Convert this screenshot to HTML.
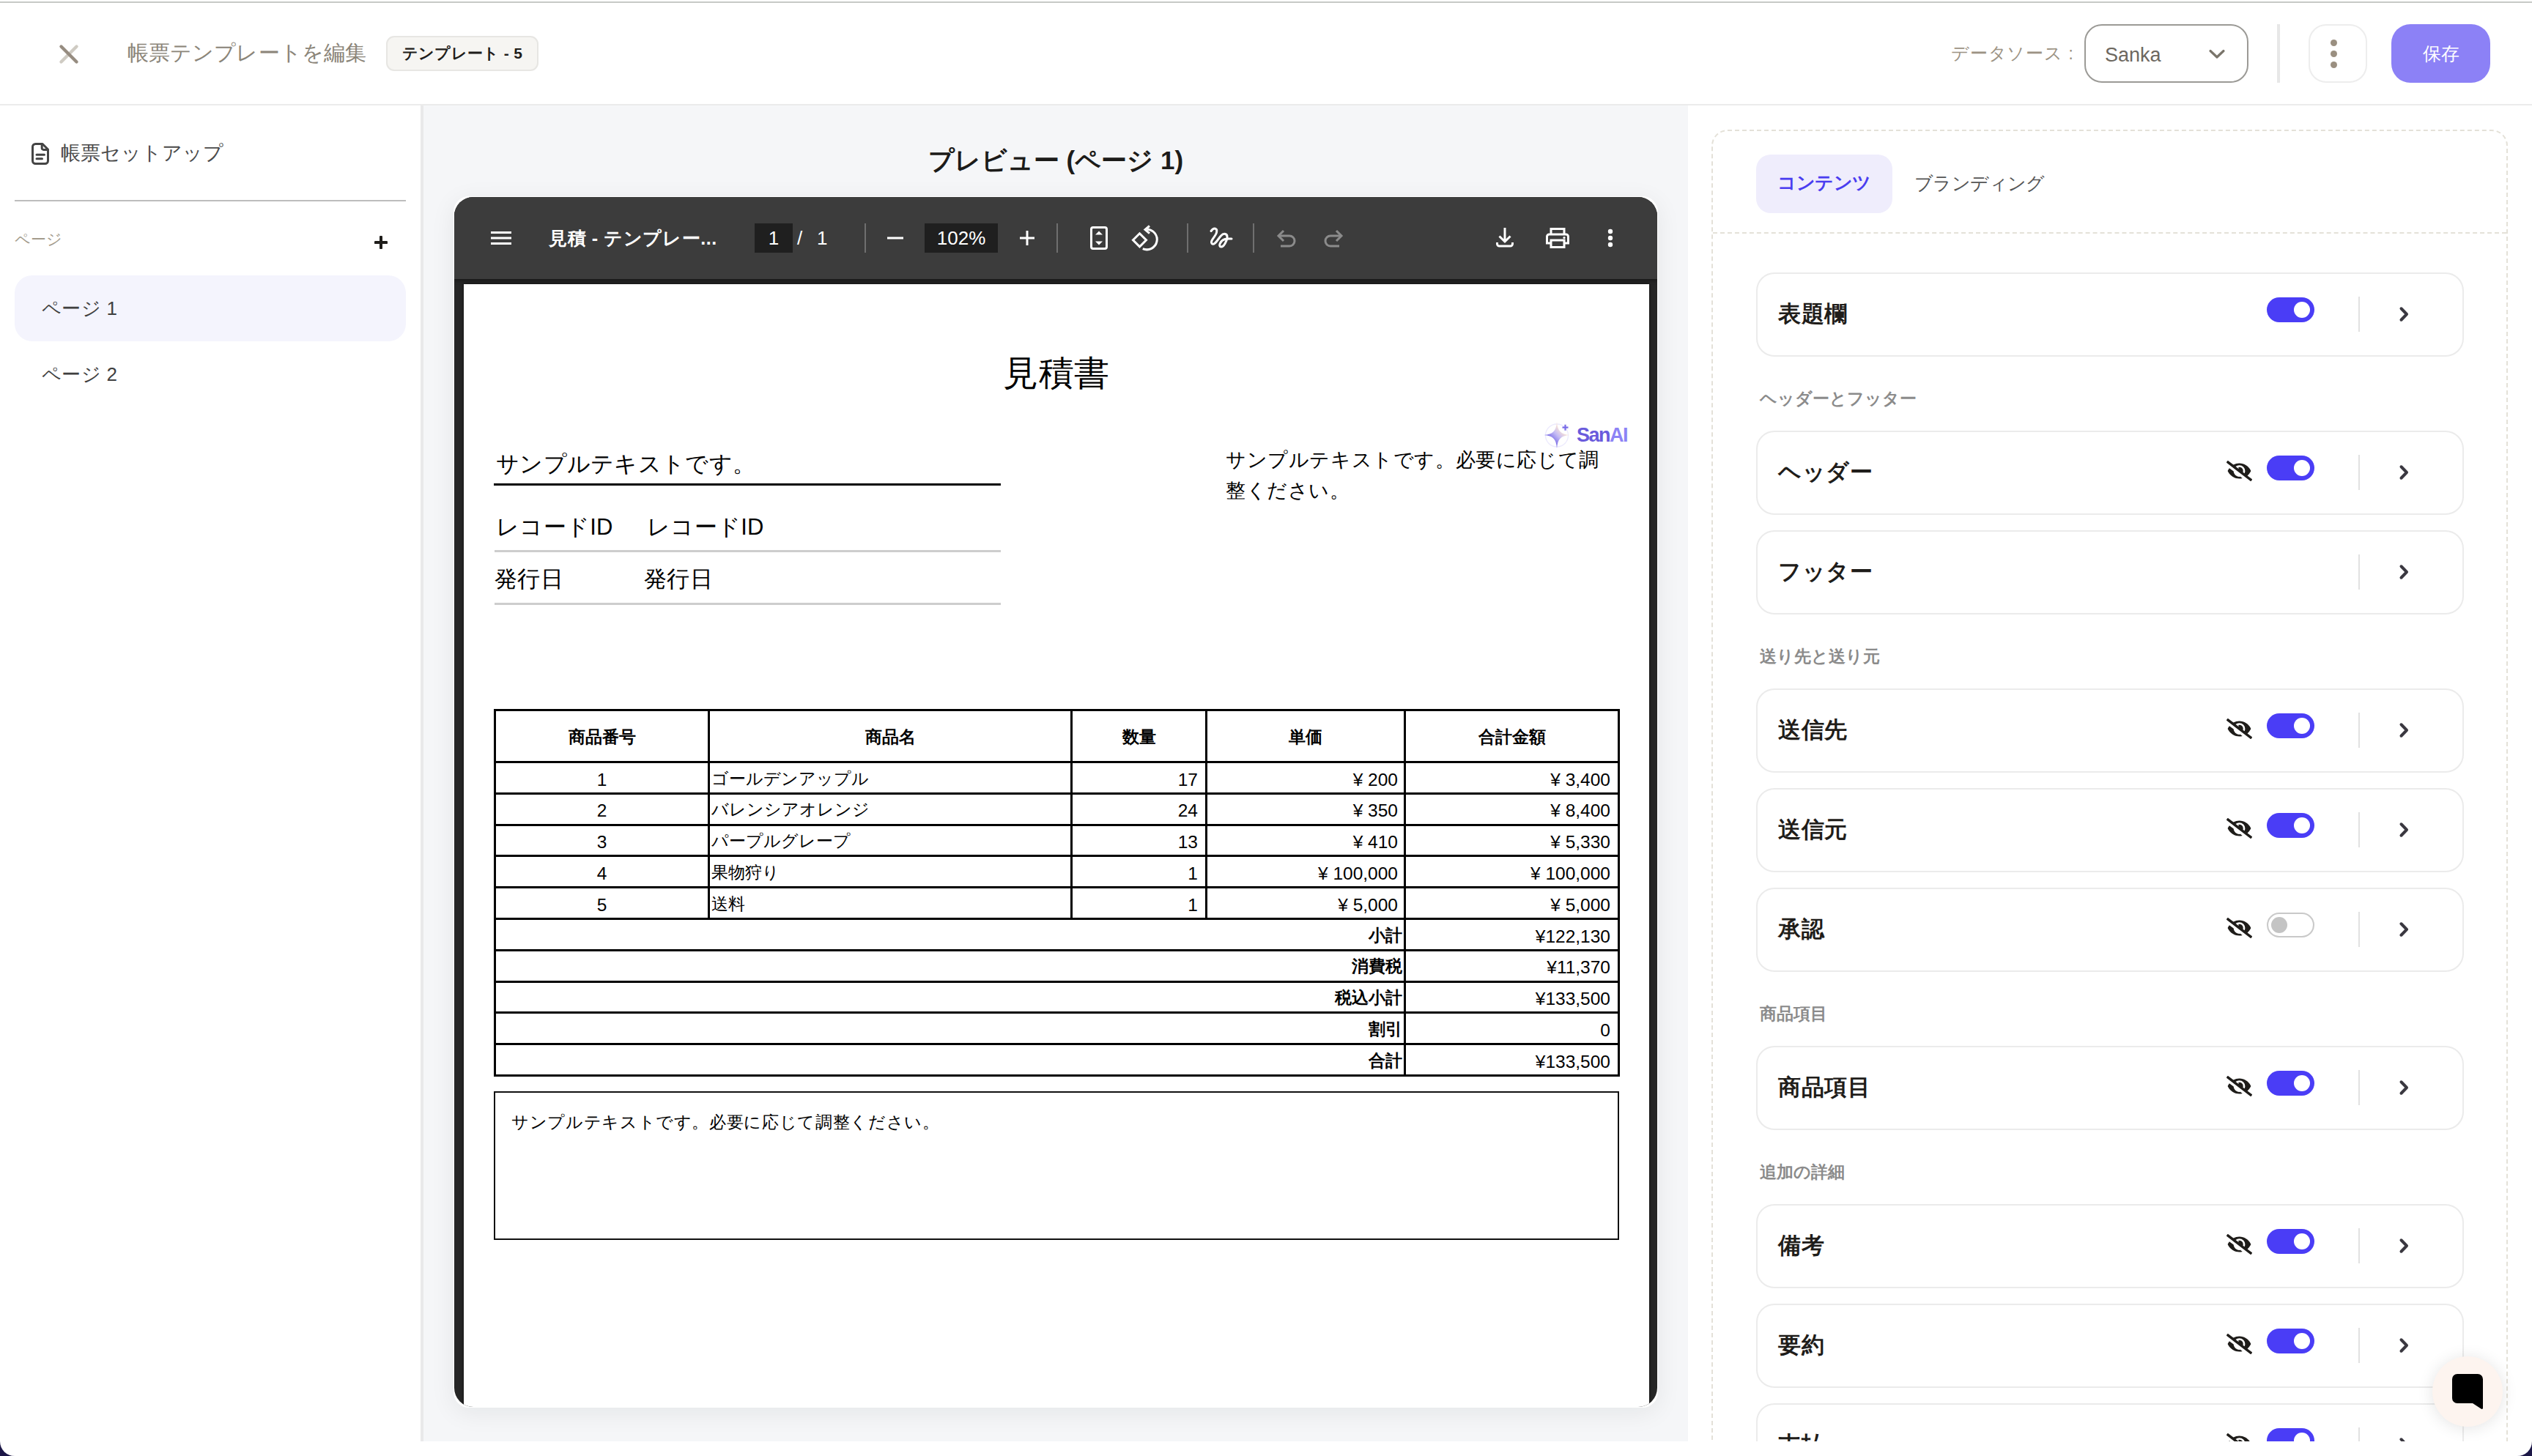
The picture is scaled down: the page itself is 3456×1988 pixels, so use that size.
<!DOCTYPE html>
<html lang="ja">
<head>
<meta charset="utf-8">
<title>帳票テンプレートを編集</title>
<style>
*{box-sizing:border-box;margin:0;padding:0}
html,body{width:3456px;height:1988px;overflow:hidden;background:#1c1747}
body{font-family:"Liberation Sans",sans-serif;color:#1f1d1a;position:relative}
.abs{position:absolute}
#win{position:absolute;left:0;top:0;width:3456px;height:1988px;background:#fff;border-radius:0 0 20px 20px;overflow:hidden}
/* top bar */
#topline{left:0;top:2px;width:3456px;height:2px;background:#c7c9c6}
#topbar{left:0;top:4px;width:3456px;height:140px;background:#fff;border-bottom:2px solid #ebebeb}
#title{left:174px;top:52px;font-size:29px;letter-spacing:.1px;line-height:40px;color:#8b8579;white-space:nowrap}
#badge{left:527px;top:49px;width:208px;height:48px;border:2px solid #e7e6e3;border-radius:11px;background:#f6f5f2;font-size:21px;letter-spacing:.3px;font-weight:bold;line-height:44px;text-align:center;color:#1f1d1a;white-space:nowrap}
#dslabel{left:2663px;top:55px;font-size:24px;letter-spacing:.8px;line-height:36px;color:#9c9384;white-space:nowrap}
#select{left:2845px;top:33px;width:224px;height:80px;border:2px solid #9b9a96;border-radius:24px;background:#fff}
#select span{position:absolute;left:26px;top:19.5px;font-size:27px;line-height:40px;color:#6d685f}
#hdiv{left:3108px;top:33px;width:4px;height:80px;background:#e7e7e7}
#kebab{left:3151px;top:33px;width:80px;height:80px;border:2px solid #ededed;border-radius:24px;background:#fff}
#kebab i{position:absolute;left:28px;width:9px;height:9px;border-radius:50%;background:#9a8f80}
#save{left:3264px;top:33px;width:135px;height:80px;border-radius:26px;background:#8c81f6;color:#fff;font-size:25px;line-height:80px;text-align:center}
/* sidebar */
#side{left:0;top:144px;width:574px;height:1824px;background:#fff}
#sideborder{left:574px;top:144px;width:4px;height:1824px;background:#e9e9ea}
#setup{left:83px;top:190px;font-size:27px;line-height:38px;color:#4b4b4b;white-space:nowrap}
#sdiv{left:20px;top:273px;width:534px;height:2px;background:#bdbdbd}
#pglabel{left:20px;top:312px;font-size:21px;line-height:30px;color:#a39b8c}
#pg1{left:20px;top:376px;width:534px;height:90px;border-radius:24px;background:#f4f4fd}
.pgt{font-size:26px;letter-spacing:.3px;line-height:36px;color:#3f3f3f;white-space:nowrap}
/* center */
#center{left:578px;top:144px;width:1726px;height:1824px;background:#f5f6f8}
#ptitle{left:620px;top:192px;width:1642px;text-align:center;font-size:35px;font-weight:bold;line-height:54px;color:#1c1b19;white-space:nowrap}
#vunder{left:619px;top:268px;width:1644px;height:1654px;border-radius:21px;background:#fff;box-shadow:0 7px 34px rgba(20,22,30,.07)}
#viewer{left:620px;top:269px;width:1642px;height:1652px;border-radius:26px;background:#262626;overflow:hidden}
#tb{left:0;top:0;width:1642px;height:112px;background:#3c3c3c;box-shadow:0 2px 5px rgba(0,0,0,.4)}
#tb .t{position:absolute;color:#fff;white-space:nowrap}
#tb .sep{position:absolute;top:36px;width:2px;height:40px;background:#6f6f6f}
#tb .box{position:absolute;top:36px;height:40px;background:#1f1f1f;color:#fff;text-align:center;font-size:26px;line-height:40px}
#page{left:13px;top:119px;width:1618px;height:1600px;background:#fff;color:#000;box-shadow:0 0 4px rgba(0,0,0,.7)}
#page .t{position:absolute;white-space:nowrap}
/* right */
#right{left:2304px;top:144px;width:1152px;height:1824px;background:#fff;overflow:hidden}
#dash{left:32px;top:33px;width:1087px;height:1900px;border:2px dashed #e4e1d8;border-radius:22px}
#dashh{left:34px;top:173px;width:1083px;height:0;border-top:2px dashed #e4e1d8}
#tab1{left:93px;top:67px;width:186px;height:80px;border-radius:20px;background:#efedfc;color:#4a3df0;font-weight:bold;font-size:25px;letter-spacing:-.4px;line-height:76px;text-align:center}
#tab2{left:309px;top:67px;font-size:25px;letter-spacing:-.6px;line-height:78px;color:#555;white-space:nowrap}
.card{position:absolute;left:93px;width:966px;height:115px;border:2px solid #ebebeb;border-radius:25px;background:#fff}
.card .nm{position:absolute;left:28px;top:32px;font-size:31px;letter-spacing:.6px;font-weight:bold;line-height:46px;color:#1f1d1a;white-space:nowrap}
.card .vd{position:absolute;left:820px;top:31px;width:2px;height:48px;background:#e1e1e1}
.card .chev{position:absolute;left:872px;top:41px}
.card .tg{position:absolute;left:695px;top:32px;width:65px;height:34px;border-radius:17px;background:#4a3df6}
.card .tg i{position:absolute;left:37px;top:6px;width:22px;height:22px;border-radius:50%;background:#fff}
.card .tg.off{background:#fff;border:2px solid #c9c9c9}
.card .tg.off i{left:4px;top:4px;background:#c4c4c4}
.card .eye{position:absolute;left:639.500px;top:39px}
.sec{position:absolute;left:98px;font-size:23px;font-weight:bold;line-height:32px;color:#8b8b8b;white-space:nowrap}
#chat{left:3320px;top:1852px;width:96px;height:96px;border-radius:50%;background:#fdf4ef;box-shadow:0 2px 22px rgba(0,0,0,.11)}
</style>
</head>
<body>
<div id="win">
<!-- TOP BAR -->
<div class="abs" id="topbar"></div>
<div class="abs" id="topline"></div>
<svg class="abs" style="left:77px;top:57px" width="34" height="34" viewBox="0 0 34 34"><path d="M27.500 6.500L6.500 27.500" stroke="#cfcbc3" stroke-width="4.400" stroke-linecap="round"/><path d="M6.500 6.500L27.500 27.500" stroke="#968c80" stroke-width="4.400" stroke-linecap="round"/></svg>
<div class="abs" id="title">帳票テンプレートを編集</div>
<div class="abs" id="badge">テンプレート - 5</div>
<div class="abs" id="dslabel">データソース :</div>
<div class="abs" id="select"><span>Sanka</span><svg class="abs" style="left:165px;top:30px" width="28" height="18" viewBox="0 0 28 18"><path d="M5 4.5L14 13L23 4.5" fill="none" stroke="#7a756b" stroke-width="3.2" stroke-linecap="round" stroke-linejoin="round"/></svg></div>
<div class="abs" id="hdiv"></div>
<div class="abs" id="kebab"><i style="top:19px"></i><i style="top:34px"></i><i style="top:49px"></i></div>
<div class="abs" id="save">保存</div>

<!-- SIDEBAR -->
<div class="abs" id="side"></div>
<div class="abs" id="sideborder"></div>
<svg class="abs" style="left:41px;top:193px" width="28" height="34" viewBox="0 0 28 34"><path d="M7.500 3.500H17L24.500 11V26.500a4 4 0 0 1-4 4H7.500A4 4 0 0 1 3.500 26.500V7.500A4 4 0 0 1 7.500 3.500Z" fill="none" stroke="#444" stroke-width="3" stroke-linejoin="round"/><path d="M16.200 4V9.200A2.200 2.200 0 0 0 18.400 11.400H24" fill="none" stroke="#444" stroke-width="3"/><path d="M9 18.200H19.500M9 23.700H16.500" stroke="#444" stroke-width="3" stroke-linecap="round"/></svg>
<div class="abs" id="setup">帳票セットアップ</div>
<div class="abs" id="sdiv"></div>
<div class="abs" id="pglabel">ページ</div>
<svg class="abs" style="left:511px;top:322px" width="18" height="18" viewBox="0 0 18 18"><path d="M9 1.500V16.500M1.500 9H16.500" stroke="#1f1d1a" stroke-width="4" stroke-linecap="round"/></svg>
<div class="abs" id="pg1"></div>
<div class="abs pgt" style="left:57px;top:403px">ページ 1</div>
<div class="abs pgt" style="left:57px;top:493px">ページ 2</div>

<!-- CENTER -->
<div class="abs" id="center"></div>
<div class="abs" id="ptitle">プレビュー (ページ 1)</div>
<div class="abs" id="vunder"></div>
<div class="abs" id="viewer">
<div class="abs" id="page"><!--PAGE-->
<div class="t" style="left:736px;top:92px;font-size:48px;line-height:60px;letter-spacing:.5px">見積書</div>
<svg class="abs" style="left:1472px;top:186px" width="40" height="40" viewBox="0 0 40 40"><defs><linearGradient id="lg" gradientUnits="userSpaceOnUse" x1="9" y1="31" x2="31" y2="9"><stop offset="0" stop-color="#5646de"/><stop offset=".5" stop-color="#c3baf5"/><stop offset=".8" stop-color="#f6e1da"/><stop offset="1" stop-color="#fbe6d8"/></linearGradient></defs><circle cx="20" cy="20.500" r="15.500" fill="none" stroke="#eceafd" stroke-width="1.300"/><path d="M20 2C21 14.500 25.500 19 37.500 20C25.500 21 21 25.500 20 38C19 25.500 14.500 21 2.500 20C14.500 19 19 14.500 20 2Z" fill="url(#lg)"/><path d="M31.500 5.700V13.700M27.500 9.700H35.500" stroke="#7a6de8" stroke-width="2.200"/></svg>
<div class="t" style="left:1519px;top:188px;font-size:27px;line-height:36px;font-weight:bold;letter-spacing:-1.500px"><span style="color:#6a5bdc">San</span><span style="color:#8d83f5">AI</span></div>
<div class="t" style="left:44px;top:225px;font-size:31px;line-height:42px;letter-spacing:.3px">サンプルテキストです。</div>
<div class="abs" style="left:41px;top:271.5px;width:692px;height:3px;background:#000"></div>
<div class="t" style="left:44px;top:311px;font-size:31px;line-height:42px;letter-spacing:.3px">レコードID</div>
<div class="t" style="left:250px;top:311px;font-size:31px;line-height:42px;letter-spacing:.3px">レコードID</div>
<div class="abs" style="left:42px;top:363px;width:691px;height:3px;background:#cdcdcd"></div>
<div class="t" style="left:42px;top:382px;font-size:31px;line-height:42px;letter-spacing:.3px">発行日</div>
<div class="t" style="left:246px;top:382px;font-size:31px;line-height:42px;letter-spacing:.3px">発行日</div>
<div class="abs" style="left:42px;top:435px;width:691px;height:3px;background:#cdcdcd"></div>
<div class="t" style="left:1040px;top:218.5px;font-size:27px;line-height:42px;letter-spacing:.6px">サンプルテキストです。必要に応じて調</div>
<div class="t" style="left:1040px;top:261px;font-size:27px;line-height:42px;letter-spacing:.6px">整ください。</div>
<div class="abs" style="left:41px;top:580px;width:1537px;height:3px;background:#000"></div>
<div class="abs" style="left:41px;top:651px;width:1537px;height:3px;background:#000"></div>
<div class="abs" style="left:41px;top:693.8px;width:1537px;height:3px;background:#000"></div>
<div class="abs" style="left:41px;top:736.6px;width:1537px;height:3px;background:#000"></div>
<div class="abs" style="left:41px;top:779.4px;width:1537px;height:3px;background:#000"></div>
<div class="abs" style="left:41px;top:822.2px;width:1537px;height:3px;background:#000"></div>
<div class="abs" style="left:41px;top:865.0px;width:1537px;height:3px;background:#000"></div>
<div class="abs" style="left:41px;top:907.8px;width:1537px;height:3px;background:#000"></div>
<div class="abs" style="left:41px;top:950.6px;width:1537px;height:3px;background:#000"></div>
<div class="abs" style="left:41px;top:993.4px;width:1537px;height:3px;background:#000"></div>
<div class="abs" style="left:41px;top:1036.2px;width:1537px;height:3px;background:#000"></div>
<div class="abs" style="left:41px;top:1079.0px;width:1537px;height:3px;background:#000"></div>
<div class="abs" style="left:41px;top:580px;width:3px;height:502.0px;background:#000"></div>
<div class="abs" style="left:1575px;top:580px;width:3px;height:502.0px;background:#000"></div>
<div class="abs" style="left:333px;top:580px;width:3px;height:285.0px;background:#000"></div>
<div class="abs" style="left:828px;top:580px;width:3px;height:285.0px;background:#000"></div>
<div class="abs" style="left:1012px;top:580px;width:3px;height:285.0px;background:#000"></div>
<div class="abs" style="left:1283px;top:580px;width:3px;height:499.0px;background:#000"></div>
<div class="t" style="left:44px;top:584px;width:289px;height:68px;line-height:68px;font-size:23px;text-align:center;font-weight:bold;">商品番号</div>
<div class="t" style="left:336px;top:584px;width:492px;height:68px;line-height:68px;font-size:23px;text-align:center;font-weight:bold;">商品名</div>
<div class="t" style="left:831px;top:584px;width:181px;height:68px;line-height:68px;font-size:23px;text-align:center;font-weight:bold;">数量</div>
<div class="t" style="left:1015px;top:584px;width:268px;height:68px;line-height:68px;font-size:23px;text-align:center;font-weight:bold;">単価</div>
<div class="t" style="left:1286px;top:584px;width:289px;height:68px;line-height:68px;font-size:23px;text-align:center;font-weight:bold;">合計金額</div>
<div class="t" style="left:44px;top:656.5px;width:289px;height:39.8px;line-height:39.8px;font-size:24.5px;text-align:center;">1</div>
<div class="t" style="left:336px;top:655.5px;width:492px;height:39.8px;line-height:39.8px;font-size:23px;text-align:left;padding-left:2px;">ゴールデンアップル</div>
<div class="t" style="left:831px;top:656.5px;width:181px;height:39.8px;line-height:39.8px;font-size:24.5px;text-align:right;padding-right:10px;">17</div>
<div class="t" style="left:1015px;top:656.5px;width:268px;height:39.8px;line-height:39.8px;font-size:24.5px;text-align:right;padding-right:8px;">¥ 200</div>
<div class="t" style="left:1286px;top:656.5px;width:289px;height:39.8px;line-height:39.8px;font-size:24.5px;text-align:right;padding-right:10px;">¥ 3,400</div>
<div class="t" style="left:44px;top:699.3px;width:289px;height:39.8px;line-height:39.8px;font-size:24.5px;text-align:center;">2</div>
<div class="t" style="left:336px;top:698.3px;width:492px;height:39.8px;line-height:39.8px;font-size:23px;text-align:left;padding-left:2px;">バレンシアオレンジ</div>
<div class="t" style="left:831px;top:699.3px;width:181px;height:39.8px;line-height:39.8px;font-size:24.5px;text-align:right;padding-right:10px;">24</div>
<div class="t" style="left:1015px;top:699.3px;width:268px;height:39.8px;line-height:39.8px;font-size:24.5px;text-align:right;padding-right:8px;">¥ 350</div>
<div class="t" style="left:1286px;top:699.3px;width:289px;height:39.8px;line-height:39.8px;font-size:24.5px;text-align:right;padding-right:10px;">¥ 8,400</div>
<div class="t" style="left:44px;top:742.1px;width:289px;height:39.8px;line-height:39.8px;font-size:24.5px;text-align:center;">3</div>
<div class="t" style="left:336px;top:741.1px;width:492px;height:39.8px;line-height:39.8px;font-size:23px;text-align:left;padding-left:2px;">パープルグレープ</div>
<div class="t" style="left:831px;top:742.1px;width:181px;height:39.8px;line-height:39.8px;font-size:24.5px;text-align:right;padding-right:10px;">13</div>
<div class="t" style="left:1015px;top:742.1px;width:268px;height:39.8px;line-height:39.8px;font-size:24.5px;text-align:right;padding-right:8px;">¥ 410</div>
<div class="t" style="left:1286px;top:742.1px;width:289px;height:39.8px;line-height:39.8px;font-size:24.5px;text-align:right;padding-right:10px;">¥ 5,330</div>
<div class="t" style="left:44px;top:784.9px;width:289px;height:39.8px;line-height:39.8px;font-size:24.5px;text-align:center;">4</div>
<div class="t" style="left:336px;top:783.9px;width:492px;height:39.8px;line-height:39.8px;font-size:23px;text-align:left;padding-left:2px;">果物狩り</div>
<div class="t" style="left:831px;top:784.9px;width:181px;height:39.8px;line-height:39.8px;font-size:24.5px;text-align:right;padding-right:10px;">1</div>
<div class="t" style="left:1015px;top:784.9px;width:268px;height:39.8px;line-height:39.8px;font-size:24.5px;text-align:right;padding-right:8px;">¥ 100,000</div>
<div class="t" style="left:1286px;top:784.9px;width:289px;height:39.8px;line-height:39.8px;font-size:24.5px;text-align:right;padding-right:10px;">¥ 100,000</div>
<div class="t" style="left:44px;top:827.7px;width:289px;height:39.8px;line-height:39.8px;font-size:24.5px;text-align:center;">5</div>
<div class="t" style="left:336px;top:826.7px;width:492px;height:39.8px;line-height:39.8px;font-size:23px;text-align:left;padding-left:2px;">送料</div>
<div class="t" style="left:831px;top:827.7px;width:181px;height:39.8px;line-height:39.8px;font-size:24.5px;text-align:right;padding-right:10px;">1</div>
<div class="t" style="left:1015px;top:827.7px;width:268px;height:39.8px;line-height:39.8px;font-size:24.5px;text-align:right;padding-right:8px;">¥ 5,000</div>
<div class="t" style="left:1286px;top:827.7px;width:289px;height:39.8px;line-height:39.8px;font-size:24.5px;text-align:right;padding-right:10px;">¥ 5,000</div>
<div class="t" style="left:44px;top:869.5px;width:1239px;height:39.8px;line-height:39.8px;font-size:23px;text-align:right;font-weight:bold;padding-right:2px;">小計</div>
<div class="t" style="left:1286px;top:870.5px;width:289px;height:39.8px;line-height:39.8px;font-size:24.5px;text-align:right;padding-right:10px;">¥122,130</div>
<div class="t" style="left:44px;top:912.3px;width:1239px;height:39.8px;line-height:39.8px;font-size:23px;text-align:right;font-weight:bold;padding-right:2px;">消費税</div>
<div class="t" style="left:1286px;top:913.3px;width:289px;height:39.8px;line-height:39.8px;font-size:24.5px;text-align:right;padding-right:10px;">¥11,370</div>
<div class="t" style="left:44px;top:955.1px;width:1239px;height:39.8px;line-height:39.8px;font-size:23px;text-align:right;font-weight:bold;padding-right:2px;">税込小計</div>
<div class="t" style="left:1286px;top:956.1px;width:289px;height:39.8px;line-height:39.8px;font-size:24.5px;text-align:right;padding-right:10px;">¥133,500</div>
<div class="t" style="left:44px;top:997.9px;width:1239px;height:39.8px;line-height:39.8px;font-size:23px;text-align:right;font-weight:bold;padding-right:2px;">割引</div>
<div class="t" style="left:1286px;top:998.9px;width:289px;height:39.8px;line-height:39.8px;font-size:24.5px;text-align:right;padding-right:10px;">0</div>
<div class="t" style="left:44px;top:1040.7px;width:1239px;height:39.8px;line-height:39.8px;font-size:23px;text-align:right;font-weight:bold;padding-right:2px;">合計</div>
<div class="t" style="left:1286px;top:1041.7px;width:289px;height:39.8px;line-height:39.8px;font-size:24.5px;text-align:right;padding-right:10px;">¥133,500</div>
<div class="abs" style="left:41px;top:1102px;width:1536px;height:203px;border:2px solid #111"></div>
<div class="t" style="left:65px;top:1128px;font-size:23px;line-height:32px;letter-spacing:.65px">サンプルテキストです。必要に応じて調整ください。</div>
<!--/PAGE--></div>
<div class="abs" id="tb">
<svg class="abs" style="left:50px;top:46px" width="28" height="20" viewBox="0 0 28 20"><path d="M0 2.500H28M0 10H28M0 17.500H28" stroke="#fff" stroke-width="3"/></svg>
<div class="t" style="left:129px;top:38px;font-size:25px;letter-spacing:.6px;font-weight:bold;line-height:36px">見積 - テンプレー...</div>
<div class="box" style="left:410px;width:52px">1</div>
<div class="t" style="left:468px;top:36px;font-size:26px;line-height:40px">/</div>
<div class="t" style="left:495px;top:36px;font-size:26px;line-height:40px">1</div>
<div class="sep" style="left:560px"></div>
<svg class="abs" style="left:590px;top:44px" width="24" height="24" viewBox="0 0 24 24"><path d="M1 12H23" stroke="#fff" stroke-width="3"/></svg>
<div class="box" style="left:642px;width:100px">102%</div>
<svg class="abs" style="left:770px;top:44px" width="24" height="24" viewBox="0 0 24 24"><path d="M2 12H22M12 2V22" stroke="#fff" stroke-width="3"/></svg>
<div class="sep" style="left:822px"></div>
<svg class="abs" style="left:864px;top:36px" width="32" height="40" viewBox="0 0 32 40"><rect x="5.500" y="5.500" width="21" height="29" rx="2.500" fill="none" stroke="#fff" stroke-width="3"/><path d="M11 15.500L16 10.500L21 15.500ZM11 24.500L16 29.500L21 24.500Z" fill="#fff"/></svg>
<svg class="abs" style="left:922px;top:36px" width="42" height="40" viewBox="0 0 42 40"><path d="M13.500 13.800L22.500 22.800L13.500 31.800L4.500 22.800Z" fill="none" stroke="#fff" stroke-width="3"/><path d="M23.500 8.200A13.800 13.800 0 1 1 17.800 34.600" fill="none" stroke="#fff" stroke-width="3"/><path d="M27 3.500L21 8.600L27 13.700" fill="none" stroke="#fff" stroke-width="3"/></svg>
<div class="sep" style="left:1000px"></div>
<svg class="abs" style="left:1028px;top:38px" width="36" height="36" viewBox="0 0 36 36"><path d="M5 8.500C9 3 14 4.500 12.500 10.500C11 16.500 3 22 6 25.500C9.500 29 14 20 18.500 15C22.500 10.500 27.500 12 27 17C26.500 22 22.500 30.500 18.500 30C14.500 29.500 17.500 21.500 24 19.500C27 18.700 30 19 33 19" fill="none" stroke="#fff" stroke-width="3" stroke-linecap="round" stroke-linejoin="round"/></svg>
<div class="sep" style="left:1090px"></div>
<svg class="abs" style="left:1122px;top:44px" width="28" height="26" viewBox="0 0 28 26"><path d="M10 2L3 9L10 16" fill="none" stroke="#8b8b8b" stroke-width="3"/><path d="M3 9H18A7 7 0 0 1 18 23H6" fill="none" stroke="#8b8b8b" stroke-width="3"/></svg>
<svg class="abs" style="left:1186px;top:44px" width="28" height="26" viewBox="0 0 28 26"><path d="M18 2L25 9L18 16" fill="none" stroke="#8b8b8b" stroke-width="3"/><path d="M25 9H10A7 7 0 0 0 10 23H22" fill="none" stroke="#8b8b8b" stroke-width="3"/></svg>
<svg class="abs" style="left:1420px;top:40px" width="28" height="30" viewBox="0 0 28 30"><path d="M14 2V21M6.500 13.500L14 21L21.500 13.500" fill="none" stroke="#fff" stroke-width="3"/><path d="M3.500 22V24A3 3 0 0 0 6.500 27H21.500A3 3 0 0 0 24.500 24V22" fill="none" stroke="#fff" stroke-width="3"/></svg>
<svg class="abs" style="left:1488px;top:40px" width="36" height="32" viewBox="0 0 36 32"><path d="M9 11V3.500H27V11" fill="none" stroke="#fff" stroke-width="3"/><path d="M9 23H3.500V14A3 3 0 0 1 6.500 11H29.500A3 3 0 0 1 32.500 14V23H27" fill="none" stroke="#fff" stroke-width="3"/><rect x="9" y="19" width="18" height="9.500" fill="none" stroke="#fff" stroke-width="3"/><circle cx="27" cy="15.500" r="1.600" fill="#fff"/></svg>
<svg class="abs" style="left:1572px;top:42px" width="12" height="28" viewBox="0 0 12 28"><circle cx="6" cy="5" r="3.200" fill="#fff"/><circle cx="6" cy="14" r="3.200" fill="#fff"/><circle cx="6" cy="23" r="3.200" fill="#fff"/></svg>
</div>
</div>

<!-- RIGHT -->
<div class="abs" id="right">
<div class="abs" id="dash"></div>
<div class="abs" id="dashh"></div>
<div class="abs" id="tab1">コンテンツ</div>
<div class="abs" id="tab2">ブランディング</div>
<!--CARDS-->
<div class="card" style="top:228px"><div class="nm">表題欄</div><div class="tg"><i></i></div><div class="vd"></div><svg class="chev" width="20" height="28" viewBox="0 0 20 28"><path d="M6.500 6.250L14 14L6.500 21.750" fill="none" stroke="#3a3840" stroke-width="4" stroke-linecap="round" stroke-linejoin="round"/></svg></div>
<div class="card" style="top:444px"><div class="nm">ヘッダー</div><svg class="eye" width="35" height="28" viewBox="0 0 640 512"><path fill="#1f1d1a" d="M320 400c-75.850 0-137.250-58.710-142.900-133.110L72.200 185.820c-13.790 17.300-26.480 35.590-36.720 55.590a32.350 32.350 0 0 0 0 29.190C89.710 376.410 197.070 448 320 448c26.910 0 52.870-4 77.890-10.460L346 397.390a144.130 144.130 0 0 1-26 2.610zm313.820 58.100l-110.550-85.440a331.250 331.250 0 0 0 81.250-102.070 32.350 32.350 0 0 0 0-29.190C550.290 135.590 442.930 64 320 64a308.150 308.150 0 0 0-147.320 37.700L45.460 3.370A16 16 0 0 0 23 6.180L3.370 31.450A16 16 0 0 0 6.180 53.900l588.360 454.730a16 16 0 0 0 22.460-2.810l19.640-25.270a16 16 0 0 0-2.820-22.450zm-183.720-142l-39.300-30.380A94.750 94.750 0 0 0 416 256a94.760 94.760 0 0 0-121.310-92.210A47.650 47.650 0 0 1 304 192a46.640 46.640 0 0 1-1.540 10l-73.610-56.890A142.310 142.310 0 0 1 320 112a143.920 143.920 0 0 1 144 144c0 21.630-5.290 41.790-13.900 60.110z"/></svg><div class="tg"><i></i></div><div class="vd"></div><svg class="chev" width="20" height="28" viewBox="0 0 20 28"><path d="M6.500 6.250L14 14L6.500 21.750" fill="none" stroke="#3a3840" stroke-width="4" stroke-linecap="round" stroke-linejoin="round"/></svg></div>
<div class="card" style="top:580px"><div class="nm">フッター</div><div class="vd"></div><svg class="chev" width="20" height="28" viewBox="0 0 20 28"><path d="M6.500 6.250L14 14L6.500 21.750" fill="none" stroke="#3a3840" stroke-width="4" stroke-linecap="round" stroke-linejoin="round"/></svg></div>
<div class="card" style="top:796px"><div class="nm">送信先</div><svg class="eye" width="35" height="28" viewBox="0 0 640 512"><path fill="#1f1d1a" d="M320 400c-75.850 0-137.250-58.710-142.900-133.110L72.200 185.820c-13.790 17.300-26.480 35.590-36.720 55.590a32.350 32.350 0 0 0 0 29.190C89.710 376.410 197.070 448 320 448c26.910 0 52.870-4 77.890-10.460L346 397.390a144.130 144.130 0 0 1-26 2.610zm313.820 58.100l-110.550-85.440a331.250 331.250 0 0 0 81.250-102.070 32.350 32.350 0 0 0 0-29.190C550.290 135.590 442.930 64 320 64a308.150 308.150 0 0 0-147.320 37.700L45.460 3.370A16 16 0 0 0 23 6.180L3.370 31.450A16 16 0 0 0 6.180 53.900l588.360 454.730a16 16 0 0 0 22.460-2.810l19.640-25.270a16 16 0 0 0-2.820-22.450zm-183.720-142l-39.300-30.380A94.750 94.750 0 0 0 416 256a94.760 94.760 0 0 0-121.310-92.210A47.650 47.650 0 0 1 304 192a46.640 46.640 0 0 1-1.540 10l-73.610-56.890A142.310 142.310 0 0 1 320 112a143.920 143.920 0 0 1 144 144c0 21.630-5.290 41.790-13.900 60.110z"/></svg><div class="tg"><i></i></div><div class="vd"></div><svg class="chev" width="20" height="28" viewBox="0 0 20 28"><path d="M6.500 6.250L14 14L6.500 21.750" fill="none" stroke="#3a3840" stroke-width="4" stroke-linecap="round" stroke-linejoin="round"/></svg></div>
<div class="card" style="top:932px"><div class="nm">送信元</div><svg class="eye" width="35" height="28" viewBox="0 0 640 512"><path fill="#1f1d1a" d="M320 400c-75.850 0-137.250-58.710-142.900-133.110L72.200 185.820c-13.790 17.300-26.480 35.590-36.720 55.590a32.350 32.350 0 0 0 0 29.190C89.710 376.410 197.070 448 320 448c26.910 0 52.870-4 77.890-10.460L346 397.390a144.130 144.130 0 0 1-26 2.610zm313.820 58.100l-110.550-85.440a331.250 331.250 0 0 0 81.250-102.070 32.350 32.350 0 0 0 0-29.190C550.290 135.590 442.930 64 320 64a308.150 308.150 0 0 0-147.320 37.700L45.460 3.370A16 16 0 0 0 23 6.180L3.370 31.450A16 16 0 0 0 6.180 53.900l588.360 454.730a16 16 0 0 0 22.460-2.810l19.640-25.270a16 16 0 0 0-2.820-22.450zm-183.720-142l-39.300-30.380A94.750 94.750 0 0 0 416 256a94.760 94.760 0 0 0-121.310-92.210A47.650 47.650 0 0 1 304 192a46.640 46.640 0 0 1-1.540 10l-73.610-56.890A142.310 142.310 0 0 1 320 112a143.920 143.920 0 0 1 144 144c0 21.630-5.290 41.790-13.900 60.110z"/></svg><div class="tg"><i></i></div><div class="vd"></div><svg class="chev" width="20" height="28" viewBox="0 0 20 28"><path d="M6.500 6.250L14 14L6.500 21.750" fill="none" stroke="#3a3840" stroke-width="4" stroke-linecap="round" stroke-linejoin="round"/></svg></div>
<div class="card" style="top:1068px"><div class="nm">承認</div><svg class="eye" width="35" height="28" viewBox="0 0 640 512"><path fill="#1f1d1a" d="M320 400c-75.850 0-137.250-58.710-142.900-133.110L72.200 185.820c-13.790 17.300-26.480 35.590-36.720 55.590a32.350 32.350 0 0 0 0 29.190C89.710 376.410 197.070 448 320 448c26.910 0 52.870-4 77.890-10.460L346 397.390a144.130 144.130 0 0 1-26 2.610zm313.820 58.100l-110.550-85.440a331.250 331.250 0 0 0 81.250-102.070 32.350 32.350 0 0 0 0-29.190C550.290 135.590 442.930 64 320 64a308.150 308.150 0 0 0-147.320 37.700L45.460 3.370A16 16 0 0 0 23 6.180L3.370 31.450A16 16 0 0 0 6.180 53.900l588.360 454.730a16 16 0 0 0 22.460-2.810l19.640-25.270a16 16 0 0 0-2.820-22.450zm-183.720-142l-39.300-30.380A94.750 94.750 0 0 0 416 256a94.760 94.760 0 0 0-121.310-92.210A47.650 47.650 0 0 1 304 192a46.640 46.640 0 0 1-1.540 10l-73.610-56.890A142.310 142.310 0 0 1 320 112a143.920 143.920 0 0 1 144 144c0 21.630-5.290 41.790-13.900 60.110z"/></svg><div class="tg off"><i></i></div><div class="vd"></div><svg class="chev" width="20" height="28" viewBox="0 0 20 28"><path d="M6.500 6.250L14 14L6.500 21.750" fill="none" stroke="#3a3840" stroke-width="4" stroke-linecap="round" stroke-linejoin="round"/></svg></div>
<div class="card" style="top:1284px"><div class="nm">商品項目</div><svg class="eye" width="35" height="28" viewBox="0 0 640 512"><path fill="#1f1d1a" d="M320 400c-75.850 0-137.250-58.710-142.900-133.110L72.200 185.820c-13.790 17.300-26.480 35.590-36.720 55.590a32.350 32.350 0 0 0 0 29.190C89.710 376.410 197.070 448 320 448c26.910 0 52.870-4 77.890-10.460L346 397.390a144.130 144.130 0 0 1-26 2.610zm313.820 58.100l-110.550-85.440a331.250 331.250 0 0 0 81.250-102.070 32.350 32.350 0 0 0 0-29.190C550.290 135.590 442.930 64 320 64a308.150 308.150 0 0 0-147.320 37.700L45.460 3.370A16 16 0 0 0 23 6.180L3.370 31.450A16 16 0 0 0 6.180 53.900l588.360 454.730a16 16 0 0 0 22.460-2.810l19.640-25.270a16 16 0 0 0-2.820-22.450zm-183.720-142l-39.300-30.380A94.750 94.750 0 0 0 416 256a94.760 94.760 0 0 0-121.310-92.210A47.650 47.650 0 0 1 304 192a46.640 46.640 0 0 1-1.540 10l-73.610-56.890A142.310 142.310 0 0 1 320 112a143.920 143.920 0 0 1 144 144c0 21.630-5.290 41.790-13.900 60.110z"/></svg><div class="tg"><i></i></div><div class="vd"></div><svg class="chev" width="20" height="28" viewBox="0 0 20 28"><path d="M6.500 6.250L14 14L6.500 21.750" fill="none" stroke="#3a3840" stroke-width="4" stroke-linecap="round" stroke-linejoin="round"/></svg></div>
<div class="card" style="top:1500px"><div class="nm">備考</div><svg class="eye" width="35" height="28" viewBox="0 0 640 512"><path fill="#1f1d1a" d="M320 400c-75.850 0-137.250-58.710-142.900-133.110L72.200 185.820c-13.790 17.300-26.480 35.590-36.720 55.590a32.350 32.350 0 0 0 0 29.190C89.710 376.410 197.070 448 320 448c26.910 0 52.870-4 77.890-10.460L346 397.390a144.130 144.130 0 0 1-26 2.610zm313.820 58.100l-110.550-85.440a331.250 331.250 0 0 0 81.250-102.070 32.350 32.350 0 0 0 0-29.190C550.290 135.590 442.930 64 320 64a308.150 308.150 0 0 0-147.320 37.700L45.460 3.370A16 16 0 0 0 23 6.180L3.370 31.450A16 16 0 0 0 6.180 53.900l588.360 454.730a16 16 0 0 0 22.460-2.810l19.640-25.270a16 16 0 0 0-2.820-22.450zm-183.720-142l-39.300-30.380A94.750 94.750 0 0 0 416 256a94.760 94.760 0 0 0-121.310-92.210A47.650 47.650 0 0 1 304 192a46.640 46.640 0 0 1-1.540 10l-73.610-56.890A142.310 142.310 0 0 1 320 112a143.920 143.920 0 0 1 144 144c0 21.630-5.290 41.790-13.900 60.110z"/></svg><div class="tg"><i></i></div><div class="vd"></div><svg class="chev" width="20" height="28" viewBox="0 0 20 28"><path d="M6.500 6.250L14 14L6.500 21.750" fill="none" stroke="#3a3840" stroke-width="4" stroke-linecap="round" stroke-linejoin="round"/></svg></div>
<div class="card" style="top:1636px"><div class="nm">要約</div><svg class="eye" width="35" height="28" viewBox="0 0 640 512"><path fill="#1f1d1a" d="M320 400c-75.850 0-137.250-58.710-142.900-133.110L72.200 185.820c-13.790 17.300-26.480 35.590-36.720 55.590a32.350 32.350 0 0 0 0 29.190C89.710 376.410 197.070 448 320 448c26.910 0 52.870-4 77.890-10.460L346 397.390a144.130 144.130 0 0 1-26 2.610zm313.820 58.100l-110.550-85.440a331.250 331.250 0 0 0 81.250-102.070 32.350 32.350 0 0 0 0-29.190C550.290 135.590 442.930 64 320 64a308.150 308.150 0 0 0-147.320 37.700L45.460 3.370A16 16 0 0 0 23 6.180L3.370 31.450A16 16 0 0 0 6.180 53.900l588.360 454.730a16 16 0 0 0 22.460-2.810l19.640-25.270a16 16 0 0 0-2.820-22.450zm-183.720-142l-39.300-30.380A94.750 94.750 0 0 0 416 256a94.760 94.760 0 0 0-121.310-92.210A47.650 47.650 0 0 1 304 192a46.640 46.640 0 0 1-1.540 10l-73.610-56.890A142.310 142.310 0 0 1 320 112a143.920 143.920 0 0 1 144 144c0 21.630-5.290 41.790-13.900 60.110z"/></svg><div class="tg"><i></i></div><div class="vd"></div><svg class="chev" width="20" height="28" viewBox="0 0 20 28"><path d="M6.500 6.250L14 14L6.500 21.750" fill="none" stroke="#3a3840" stroke-width="4" stroke-linecap="round" stroke-linejoin="round"/></svg></div>
<div class="card" style="top:1772px"><div class="nm">支払</div><svg class="eye" width="35" height="28" viewBox="0 0 640 512"><path fill="#1f1d1a" d="M320 400c-75.850 0-137.250-58.710-142.900-133.110L72.200 185.820c-13.790 17.300-26.480 35.590-36.720 55.590a32.350 32.350 0 0 0 0 29.190C89.710 376.410 197.070 448 320 448c26.910 0 52.870-4 77.890-10.460L346 397.390a144.130 144.130 0 0 1-26 2.610zm313.820 58.100l-110.550-85.440a331.250 331.250 0 0 0 81.250-102.070 32.350 32.350 0 0 0 0-29.190C550.290 135.590 442.930 64 320 64a308.150 308.150 0 0 0-147.320 37.700L45.460 3.370A16 16 0 0 0 23 6.180L3.370 31.450A16 16 0 0 0 6.180 53.900l588.360 454.730a16 16 0 0 0 22.460-2.810l19.640-25.270a16 16 0 0 0-2.820-22.450zm-183.720-142l-39.300-30.380A94.750 94.750 0 0 0 416 256a94.760 94.760 0 0 0-121.310-92.210A47.650 47.650 0 0 1 304 192a46.640 46.640 0 0 1-1.540 10l-73.610-56.890A142.310 142.310 0 0 1 320 112a143.920 143.920 0 0 1 144 144c0 21.630-5.290 41.790-13.900 60.110z"/></svg><div class="tg"><i></i></div><div class="vd"></div><svg class="chev" width="20" height="28" viewBox="0 0 20 28"><path d="M6.500 6.250L14 14L6.500 21.750" fill="none" stroke="#3a3840" stroke-width="4" stroke-linecap="round" stroke-linejoin="round"/></svg></div>
<div class="sec" style="top:384px">ヘッダーとフッター</div>
<div class="sec" style="top:736px">送り先と送り元</div>
<div class="sec" style="top:1224px">商品項目</div>
<div class="sec" style="top:1440px">追加の詳細</div>
<!--/CARDS-->
</div>
<div class="abs" id="chat"><svg class="abs" style="left:27px;top:24px" width="42" height="48" viewBox="0 0 42 48"><path d="M7 0H35A7 7 0 0 1 42 7V46.500C42 48 40.500 48.300 39.500 47.500L28 40H7A7 7 0 0 1 0 33V7A7 7 0 0 1 7 0Z" fill="#000"/></svg></div>
</div>
</body>
</html>
